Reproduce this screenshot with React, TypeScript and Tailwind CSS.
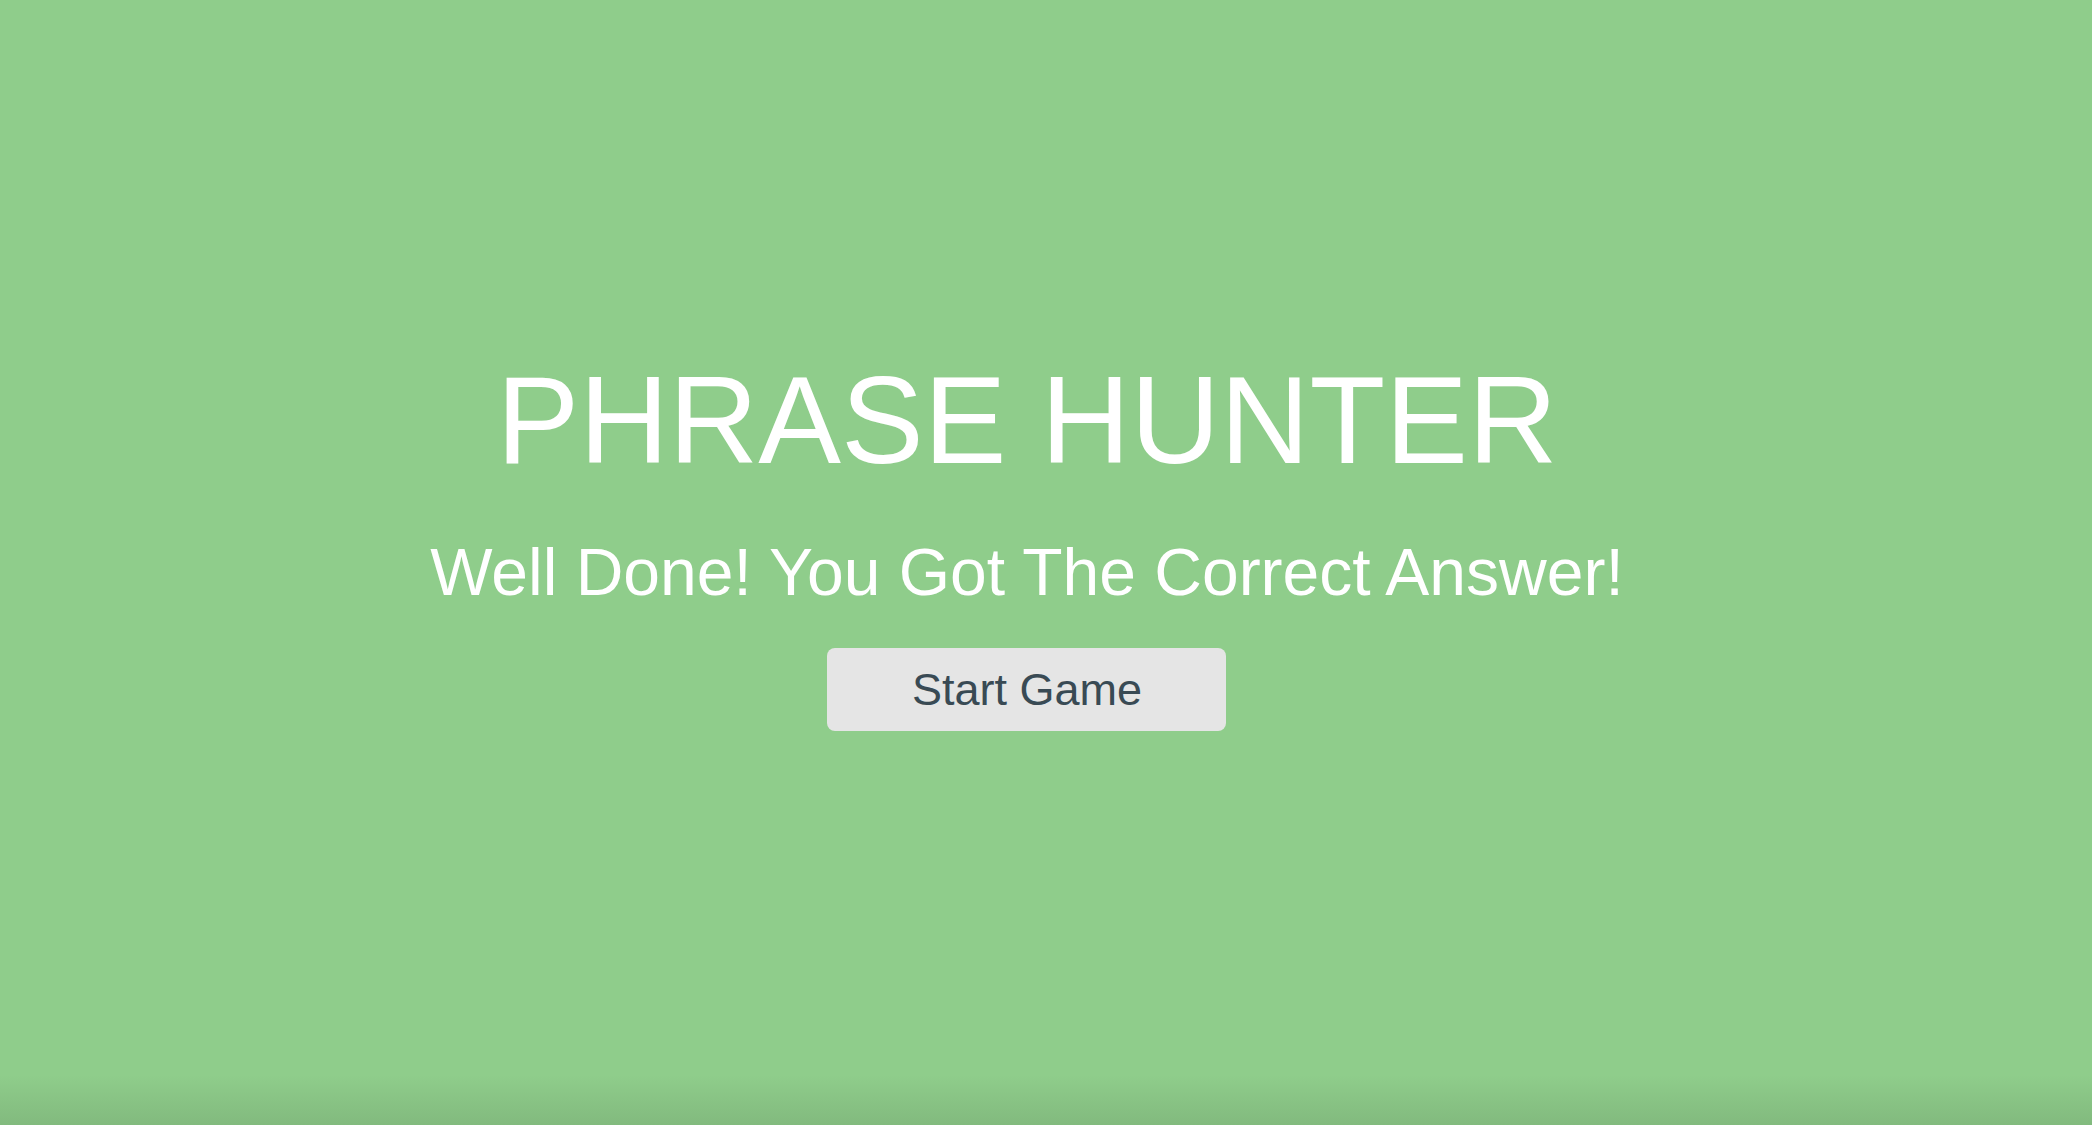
export default function App() {
  return (
    <main className="relative flex h-[1125px] w-full flex-col items-center bg-[#8fcd8b] pr-[38px] font-['Liberation_Sans',Arial,sans-serif]">
      {/* Overlay content */}
      <div className="flex flex-col items-center pt-[350px]">
        <h1 className="text-[124px] font-normal leading-[140px] text-white">PHRASE HUNTER</h1>
        <h2 className="mt-[42px] text-[66px] font-normal leading-[80px] text-white">
          Well Done! You Got The Correct Answer!
        </h2>
        <button className="mt-[36px] h-[83px] w-[399px] rounded-[8px] bg-[#e5e5e5] text-[45px] text-[#394a54]">
          Start Game
        </button>
      </div>
      <div className="absolute bottom-0 left-0 h-[50px] w-full bg-gradient-to-b from-transparent to-[#82ba7e]" />
    </main>
  );
}
